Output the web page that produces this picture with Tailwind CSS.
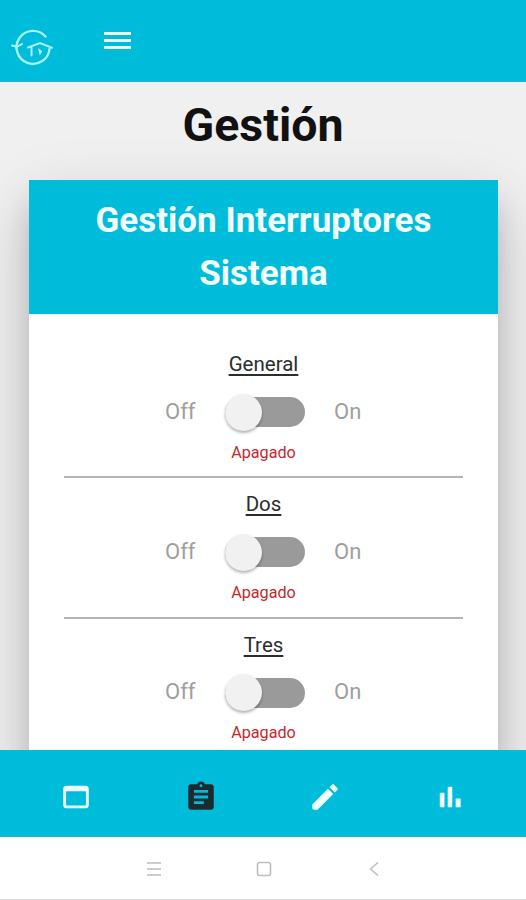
<!DOCTYPE html>
<html lang="es">
<head>
<meta charset="utf-8">
<title>Gestión</title>
<script src="https://cdn.jsdelivr.net/npm/@tailwindcss/browser@4"></script>
</head>
<body class="w-[526px] h-[900px] overflow-hidden flex flex-col bg-[#f0f0f0] font-[Roboto,sans-serif] text-[#212121]">
<header class="h-[82px] shrink-0 bg-[#00bcdb] flex border-b border-[#20b3cb]">
  <svg class="ml-[10px] mt-[29px] w-11 h-10" viewBox="0 0 44 40" fill="none" stroke="#a8f1f5" stroke-width="2.400" stroke-linecap="round">
    <path d="M35.500 7.500A16.500 16.500 0 1 0 39.500 20"/>
    <path d="M2 16.500l5 1.300M6 18.500l6-3.500M18 18.500l12-4.500 12 4.800M21.500 18.500v8" stroke-width="2"/>
    <path d="M29 20.500l2.500 2-1.500 2.500z" stroke-width="1.200" fill="#a8f1f5"/>
  </svg>
  <div class="ml-[50px] mt-[32px] flex flex-col gap-[4px]">
    <div class="w-[27px] h-[3px] bg-[#edffff]"></div>
    <div class="w-[27px] h-[3px] bg-[#edffff]"></div>
    <div class="w-[27px] h-[3px] bg-[#edffff]"></div>
  </div>
</header>
<main class="h-[668px] shrink-0 overflow-hidden">
  <h1 class="h-[98px] pt-[13px] text-center text-[46.500px] leading-[60px] font-bold text-[#111]">Gestión</h1>
  <section class="ml-[29px] w-[469px] h-[760px] bg-white shadow-[0_35px_55px_4px_rgba(0,0,0,0.13),0_13px_60px_4px_rgba(0,0,0,0.07),0_20px_24px_-3px_rgba(0,0,0,0.12)]">
    <h2 class="h-[134px] bg-[#00bcdb] pt-[14px] text-center text-[35px] leading-[53px] font-bold text-[#f4ffff]">Gestión Interruptores<br>Sistema</h2>
    <div class="px-[35px] pt-[23px]">
      <div class="h-[140.400px]">
        <div class="h-[57px] pt-[12px] text-center text-[20.500px] leading-[30px] underline decoration-[1.500px] underline-offset-[3px] text-[#2c2c2c]">General</div>
        <div class="h-[36px] flex items-center justify-center text-[22px] text-[#9e9e9e]">
          <span class="w-[60px] pb-[2px]">Off</span>
          <div class="w-[80px] h-[30px] rounded-full bg-[#9a9a9a] flex items-center"><div class="w-[37px] h-[37px] shrink-0 rounded-full bg-[#f1f1f1] shadow-[0_2px_3px_rgba(0,0,0,0.3)]"></div></div>
          <span class="w-[57px] pl-[29px] pb-[2px]">On</span>
        </div>
        <div class="h-[47px] pt-[10.500px] text-center text-[16.200px] leading-[24px] text-[#c6282c]">Apagado</div>
      </div>
    </div>
  </section>
</main>
<nav class="h-[87px] shrink-0 bg-[#00bcdb] border-b border-[#20b3cb] flex justify-between px-[59px] items-center pt-[7px]">
  <svg class="w-[34px] h-[34px]" viewBox="0 0 24 24" fill="#f2ffff"><path d="M19 4H5c-1.110 0-2 .9-2 2v12c0 1.100.89 2 2 2h14c1.100 0 2-.9 2-2V6c0-1.100-.9-2-2-2zm0 14H5V8h14v10z"/></svg>
  <svg class="w-[34px] h-[34px]" viewBox="0 0 24 24" fill="#1d2b31"><path d="M19 3h-4.180C14.400 1.840 13.300 1 12 1c-1.300 0-2.400.84-2.820 2H5c-1.100 0-2 .9-2 2v14c0 1.100.9 2 2 2h14c1.100 0 2-.9 2-2V5c0-1.100-.9-2-2-2zm-7 0c.55 0 1 .45 1 1s-.45 1-1 1-1-.45-1-1 .45-1 1-1zm2 14H7v-2h7v2zm3-4H7v-2h10v2zm0-4H7V7h10v2z"/></svg>
  <svg class="w-[34px] h-[34px]" viewBox="0 0 24 24" fill="#f2ffff"><path d="M3 17.250V19.500Q3 21 4.500 21H6.750L17.810 9.940l-3.750-3.750L3 17.250zM20.710 7.040c.39-.39.39-1.020 0-1.410l-2.340-2.340c-.39-.39-1.020-.39-1.410 0l-1.830 1.830 3.750 3.750 1.830-1.830z"/></svg>
  <svg class="w-[34px] h-[34px]" viewBox="0 0 24 24" fill="#f2ffff"><rect x="4.800" y="9" width="3.300" height="10.300" rx=".5"/><rect x="10.400" y="4.800" width="3.200" height="14.500" rx=".5"/><rect x="16" y="13" width="3.500" height="6.300" rx=".5"/></svg>
</nav>
<footer class="h-[63px] shrink-0 bg-white border-b border-[#dedede] flex items-center justify-center gap-[94px] pl-[2px] pt-[1px] text-[#bdbdbd]">
  <svg class="w-4 h-4" viewBox="0 0 16 16" fill="none" stroke="currentColor" stroke-width="1.400"><path d="M1 2h14M1 8h14M1 14h14"/></svg>
  <svg class="w-4 h-4" viewBox="0 0 16 16" fill="none" stroke="currentColor" stroke-width="1.600"><rect x="1.500" y="1.500" width="13" height="13" rx="2"/></svg>
  <svg class="w-4 h-4" viewBox="0 0 16 16" fill="none" stroke="currentColor" stroke-width="1.500"><path d="M12 1.500L4.500 8l7.500 6.500"/></svg>
</footer>
<script>
  const first = document.querySelector('section > div > div');
  for (const name of ['Dos', 'Tres']) {
    const line = document.createElement('hr');
    line.className = 'border-0 h-[2px] -mt-[1px] -mb-[1px] bg-[#b5b5b5]';
    const row = first.cloneNode(true);
    row.firstElementChild.textContent = name;
    first.parentNode.append(line, row);
  }
</script>
</body>
</html>
